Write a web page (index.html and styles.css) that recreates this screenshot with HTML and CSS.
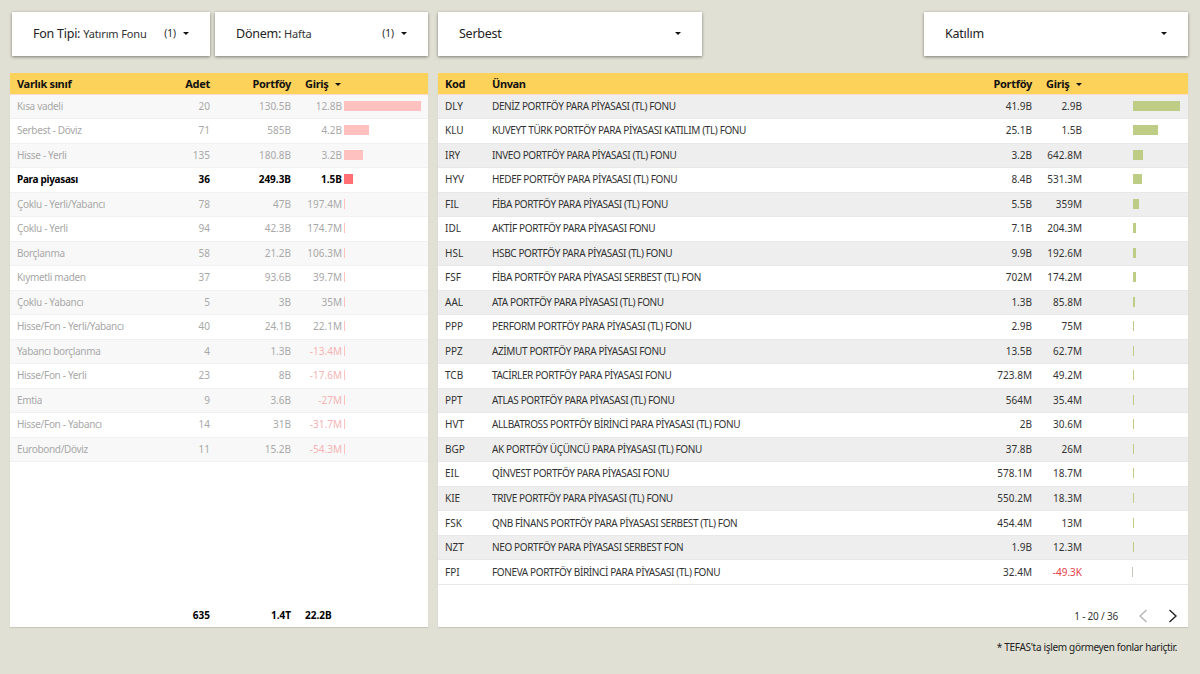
FILE: index.html
```html
<!DOCTYPE html>
<html lang="tr">
<head>
<meta charset="utf-8">
<title>Fon akışları</title>
<link rel="stylesheet" href="styles.css">
</head>
<body>
<div class="filters">
  <div class="filter f1"><span class="flabel">Fon Tipi:</span><span class="fvalue">Yatırım Fonu</span><span class="fcount">(1)</span><span class="caret"></span></div>
  <div class="filter f2"><span class="flabel">Dönem:</span><span class="fvalue">Hafta</span><span class="fcount">(1)</span><span class="caret"></span></div>
  <div class="filter f3"><span class="flabel">Serbest</span><span class="fcount"></span><span class="caret"></span></div>
  <div class="filter f4"><span class="flabel">Katılım</span><span class="fcount"></span><span class="caret"></span></div>
</div>
<div class="tables">
  <section class="card left">
    <div class="row head">
      <div>Varlık sınıf</div><div class="num">Adet</div><div class="num">Portföy</div><div class="sorthead">Giriş<span class="caret small"></span></div><div></div>
    </div>
    <div class="row"><div>Kısa vadeli</div><div class="num">20</div><div class="num">130.5B</div><div class="num">12.8B</div><div class="barcell"><i class="bar" style="width:77px"></i></div></div>
    <div class="row"><div>Serbest - Döviz</div><div class="num">71</div><div class="num">585B</div><div class="num">4.2B</div><div class="barcell"><i class="bar" style="width:25px"></i></div></div>
    <div class="row"><div>Hisse - Yerli</div><div class="num">135</div><div class="num">180.8B</div><div class="num">3.2B</div><div class="barcell"><i class="bar" style="width:19px"></i></div></div>
    <div class="row selected"><div>Para piyasası</div><div class="num">36</div><div class="num">249.3B</div><div class="num">1.5B</div><div class="barcell"><i class="bar" style="width:9px"></i></div></div>
    <div class="row"><div>Çoklu - Yerli/Yabancı</div><div class="num">78</div><div class="num">47B</div><div class="num">197.4M</div><div class="barcell"><i class="bar" style="width:1px"></i></div></div>
    <div class="row"><div>Çoklu - Yerli</div><div class="num">94</div><div class="num">42.3B</div><div class="num">174.7M</div><div class="barcell"><i class="bar" style="width:1px"></i></div></div>
    <div class="row"><div>Borçlanma</div><div class="num">58</div><div class="num">21.2B</div><div class="num">106.3M</div><div class="barcell"><i class="bar" style="width:1px"></i></div></div>
    <div class="row"><div>Kıymetli maden</div><div class="num">37</div><div class="num">93.6B</div><div class="num">39.7M</div><div class="barcell"><i class="bar" style="width:1px"></i></div></div>
    <div class="row"><div>Çoklu - Yabancı</div><div class="num">5</div><div class="num">3B</div><div class="num">35M</div><div class="barcell"><i class="bar" style="width:1px"></i></div></div>
    <div class="row"><div>Hisse/Fon - Yerli/Yabancı</div><div class="num">40</div><div class="num">24.1B</div><div class="num">22.1M</div><div class="barcell"><i class="bar" style="width:1px"></i></div></div>
    <div class="row neg"><div>Yabancı borçlanma</div><div class="num">4</div><div class="num">1.3B</div><div class="num">-13.4M</div><div class="barcell"><i class="bar" style="width:1px"></i></div></div>
    <div class="row neg"><div>Hisse/Fon - Yerli</div><div class="num">23</div><div class="num">8B</div><div class="num">-17.6M</div><div class="barcell"><i class="bar" style="width:1px"></i></div></div>
    <div class="row neg"><div>Emtia</div><div class="num">9</div><div class="num">3.6B</div><div class="num">-27M</div><div class="barcell"><i class="bar" style="width:1px"></i></div></div>
    <div class="row neg"><div>Hisse/Fon - Yabancı</div><div class="num">14</div><div class="num">31B</div><div class="num">-31.7M</div><div class="barcell"><i class="bar" style="width:1px"></i></div></div>
    <div class="row neg"><div>Eurobond/Döviz</div><div class="num">11</div><div class="num">15.2B</div><div class="num">-54.3M</div><div class="barcell"><i class="bar" style="width:1px"></i></div></div>
    <div class="row total"><div></div><div class="num">635</div><div class="num">1.4T</div><div class="totalflow">22.2B</div><div></div></div>
  </section>
  <section class="card right">
    <div class="row head">
      <div>Kod</div><div>Ünvan</div><div class="num">Portföy</div><div class="sorthead">Giriş<span class="caret small"></span></div><div></div>
    </div>
    <div class="row"><div>DLY</div><div>DENİZ PORTFÖY PARA PİYASASI (TL) FONU</div><div class="num">41.9B</div><div class="num">2.9B</div><div class="barcell"><i class="bar" style="width:47px"></i></div></div>
    <div class="row"><div>KLU</div><div>KUVEYT TÜRK PORTFÖY PARA PİYASASI KATILIM (TL) FONU</div><div class="num">25.1B</div><div class="num">1.5B</div><div class="barcell"><i class="bar" style="width:25px"></i></div></div>
    <div class="row"><div>IRY</div><div>INVEO PORTFÖY PARA PİYASASI (TL) FONU</div><div class="num">3.2B</div><div class="num">642.8M</div><div class="barcell"><i class="bar" style="width:10px"></i></div></div>
    <div class="row"><div>HYV</div><div>HEDEF PORTFÖY PARA PİYASASI (TL) FONU</div><div class="num">8.4B</div><div class="num">531.3M</div><div class="barcell"><i class="bar" style="width:9px"></i></div></div>
    <div class="row"><div>FIL</div><div>FİBA PORTFÖY PARA PİYASASI (TL) FONU</div><div class="num">5.5B</div><div class="num">359M</div><div class="barcell"><i class="bar" style="width:6px"></i></div></div>
    <div class="row"><div>IDL</div><div>AKTİF PORTFÖY PARA PİYASASI FONU</div><div class="num">7.1B</div><div class="num">204.3M</div><div class="barcell"><i class="bar" style="width:3px"></i></div></div>
    <div class="row"><div>HSL</div><div>HSBC PORTFÖY PARA PİYASASI (TL) FONU</div><div class="num">9.9B</div><div class="num">192.6M</div><div class="barcell"><i class="bar" style="width:3px"></i></div></div>
    <div class="row"><div>FSF</div><div>FİBA PORTFÖY PARA PİYASASI SERBEST (TL) FON</div><div class="num">702M</div><div class="num">174.2M</div><div class="barcell"><i class="bar" style="width:3px"></i></div></div>
    <div class="row"><div>AAL</div><div>ATA PORTFÖY PARA PİYASASI (TL) FONU</div><div class="num">1.3B</div><div class="num">85.8M</div><div class="barcell"><i class="bar" style="width:2px"></i></div></div>
    <div class="row"><div>PPP</div><div>PERFORM PORTFÖY PARA PİYASASI (TL) FONU</div><div class="num">2.9B</div><div class="num">75M</div><div class="barcell"><i class="bar" style="width:1px"></i></div></div>
    <div class="row"><div>PPZ</div><div>AZİMUT PORTFÖY PARA PİYASASI FONU</div><div class="num">13.5B</div><div class="num">62.7M</div><div class="barcell"><i class="bar" style="width:1px"></i></div></div>
    <div class="row"><div>TCB</div><div>TACİRLER PORTFÖY PARA PİYASASI FONU</div><div class="num">723.8M</div><div class="num">49.2M</div><div class="barcell"><i class="bar" style="width:1px"></i></div></div>
    <div class="row"><div>PPT</div><div>ATLAS PORTFÖY PARA PİYASASI (TL) FONU</div><div class="num">564M</div><div class="num">35.4M</div><div class="barcell"><i class="bar" style="width:1px"></i></div></div>
    <div class="row"><div>HVT</div><div>ALLBATROSS PORTFÖY BİRİNCİ PARA PİYASASI (TL) FONU</div><div class="num">2B</div><div class="num">30.6M</div><div class="barcell"><i class="bar" style="width:1px"></i></div></div>
    <div class="row"><div>BGP</div><div>AK PORTFÖY ÜÇÜNCÜ PARA PİYASASI (TL) FONU</div><div class="num">37.8B</div><div class="num">26M</div><div class="barcell"><i class="bar" style="width:1px"></i></div></div>
    <div class="row"><div>EIL</div><div>QİNVEST PORTFÖY PARA PİYASASI FONU</div><div class="num">578.1M</div><div class="num">18.7M</div><div class="barcell"><i class="bar" style="width:1px"></i></div></div>
    <div class="row"><div>KIE</div><div>TRIVE PORTFÖY PARA PİYASASI (TL) FONU</div><div class="num">550.2M</div><div class="num">18.3M</div><div class="barcell"><i class="bar" style="width:1px"></i></div></div>
    <div class="row"><div>FSK</div><div>QNB FİNANS PORTFÖY PARA PİYASASI SERBEST (TL) FON</div><div class="num">454.4M</div><div class="num">13M</div><div class="barcell"><i class="bar" style="width:1px"></i></div></div>
    <div class="row"><div>NZT</div><div>NEO PORTFÖY PARA PİYASASI SERBEST FON</div><div class="num">1.9B</div><div class="num">12.3M</div><div class="barcell"><i class="bar" style="width:1px"></i></div></div>
    <div class="row negflow"><div>FPI</div><div>FONEVA PORTFÖY BİRİNCİ PARA PİYASASI (TL) FONU</div><div class="num">32.4M</div><div class="num flow">-49.3K</div><div class="barcell"><i class="bar" style="width:1px"></i></div></div>
    <div class="pager">
      <span class="pagetext">1 - 20 / 36</span>
      <svg class="chev" width="10" height="14" viewBox="0 0 10 14"><path d="M8.5 1 L2 7 L8.5 13" fill="none" stroke="#b5b5b5" stroke-width="1.4"/></svg>
      <svg class="chev" width="10" height="14" viewBox="0 0 10 14"><path d="M1.5 1 L8 7 L1.5 13" fill="none" stroke="#222" stroke-width="1.4"/></svg>
    </div>
  </section>
</div>
<p class="note">* TEFAS'ta işlem görmeyen fonlar hariçtir.</p>
</body>
</html>
```
FILE: styles.css
```css
* { box-sizing: border-box; }
html, body { height: 100%; }
body {
  margin: 0;
  background: #e0e0d4;
  font-family: "Noto Sans", "Open Sans", sans-serif;
  color: #333;
  overflow: hidden;
  padding-top: 12px;
}
.filters { display: flex; padding-left: 12px; height: 44px; }
.filter {
  display: flex;
  align-items: center;
  background: #fff;
  box-shadow: 0 1px 3px rgba(0,0,0,.45);
  padding: 0 21px 2px;
  white-space: pre;
  color: #222;
}
.f1 { width: 198px; margin-right: 5px; }
.f2 { width: 213px; margin-right: 10px; }
.f3 { width: 264px; margin-right: 222px; }
.f4 { width: 264px; }
.flabel { font-size: 12.5px; letter-spacing: -.25px; }
.fvalue { font-size: 11px; color: #333; margin-left: 3px; letter-spacing: -.15px; }
.fcount { margin-left: auto; margin-right: 7px; font-size: 10px; color: #222; }
.caret {
  width: 0; height: 0;
  border-left: 3px solid transparent;
  border-right: 3px solid transparent;
  border-top: 3px solid #111;
}
.caret.small { display: inline-block; margin-left: 7px; vertical-align: 2px; }
.tables { display: flex; gap: 10px; padding-left: 10px; margin-top: 17px; height: 554px; }
.card {
  background: #fff;
  display: flex;
  flex-direction: column;
  box-shadow: 0 1px 1px rgba(0,0,0,.1);
}
.left { width: 418px; }
.right { width: 750px; }
.row {
  display: grid;
  height: 24.53px;
  align-items: center;
  font-size: 10px;
  border-bottom: 1px solid #e8e8e8;
  white-space: nowrap;
  padding-bottom: 1px;
}
.left .row { grid-template-columns: 150px 50px 81px 51px 86px; color: #a8a8a8; border-bottom-color: #f1f1f1; }
.right .row { grid-template-columns: 47px 497px 50px 50px 106px; color: #333; }
.row > div:first-child { padding-left: 7px; }
.left .row > div:first-child { letter-spacing: -.32px; }
.right .row > div:nth-child(2) { padding-left: 7px; letter-spacing: -.38px; }
.left .row:nth-child(even):not(.head) { background: #f8f8f8; }
.right .row:nth-child(even):not(.head) { background: #eee; }
.row.head {
  height: 21.5px;
  background: #fdd25b;
  color: #111;
  font-weight: 700;
  font-size: 11px;
  border-bottom: 1px solid #fbdcc8;
  letter-spacing: -.3px;
  padding-bottom: 0;
}
.row.head > div { letter-spacing: -.3px; }
.num { text-align: right; }
.sorthead { padding-left: 14px; }
.barcell { display: flex; align-items: center; }
.left .barcell { padding-left: 2px; }
.right .barcell { padding-left: 51px; }
.bar { display: block; height: 10px; }
.left .bar { background: #ffc0c0; }
.right .bar { background: #bdcd85; }
.left .row.selected { color: #000; font-weight: 700; background: #fff; }
.left .row.selected .bar { background: #ff7075; }
.row.neg .num:nth-child(4) { color: #f5b3b3; }
.row.negflow .flow { color: #e8404a; }
.row.negflow .bar { background: #c8c8b8; margin-left: -1px; }
.left .row.total {
  margin-top: auto;
  height: 24px;
  border-bottom: 0;
  padding-bottom: 0;
  color: #000;
  font-weight: 700;
  background: #fff;
}
.totalflow { padding-left: 14px; }
.pager {
  margin-top: auto;
  height: 22px;
  display: flex;
  align-items: center;
  justify-content: flex-end;
  padding-right: 10px;
  font-size: 10px;
  color: #333;
}
.pagetext { margin-right: 20px; letter-spacing: -.2px; }
.chev + .chev { margin-left: 20px; }
.note {
  margin: 13px 23px 0 0;
  text-align: right;
  font-size: 10px;
  letter-spacing: -.32px;
  color: #222;
}
```
